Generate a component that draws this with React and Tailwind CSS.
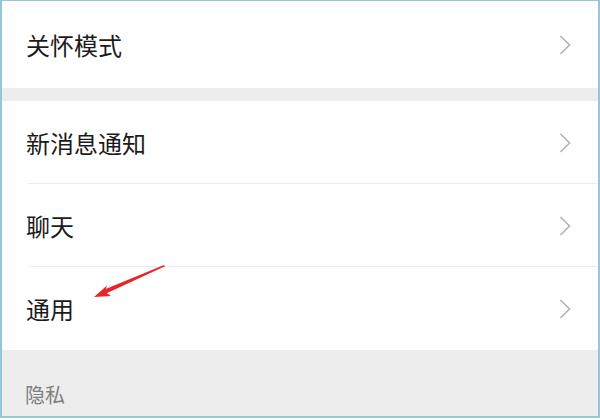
const Chevron = () => (
  <svg width="14" height="22" viewBox="0 0 14 22" className="mr-[26px]">
    <path d="M2.5 2 L11.5 11 L2.5 20" fill="none" stroke="#b3b3b3" strokeWidth="1.6" />
  </svg>
);

const Row = ({ label, divider, children }) => (
  <div className="relative flex items-center justify-between h-[83px] bg-white">
    <span className="pl-[24px] text-[24px] text-[#1b1b1b]">{label}</span>
    <Chevron />
    {divider && <div className="absolute bottom-0 left-[26px] right-0 h-px bg-[#ececec]" />}
    {children}
  </div>
);

export default function App() {
  return (
    <div
      className="w-[600px] h-[418px] border-2 border-t border-[#94c6dc] bg-[#ededed] overflow-hidden"
      style={{ fontFamily: '"Noto Sans CJK SC", "Noto Sans", sans-serif' }}
    >
      <div className="flex items-center justify-between h-[87px] bg-white">
        <span className="pl-[24px] text-[24px] text-[#1b1b1b]">关怀模式</span>
        <Chevron />
      </div>
      <div className="h-[13px]" />
      <Row label="新消息通知" divider />
      <Row label="聊天" divider />
      <Row label="通用">
        {/* red annotation arrow */}
        <svg className="absolute left-[86px] top-[-4px]" width="84" height="44" viewBox="0 0 84 44">
          <path d="M76 2 L77 3.2 L16 31.5 L14 27.5 Z" fill="#e8262a" />
          <path d="M6 34 L19 22.5 L17 29 L23 33 Z" fill="#e8262a" />
        </svg>
      </Row>
      <div className="pt-[30px] pl-[23px] text-[20px] text-[#808080]">隐私</div>
    </div>
  );
}
